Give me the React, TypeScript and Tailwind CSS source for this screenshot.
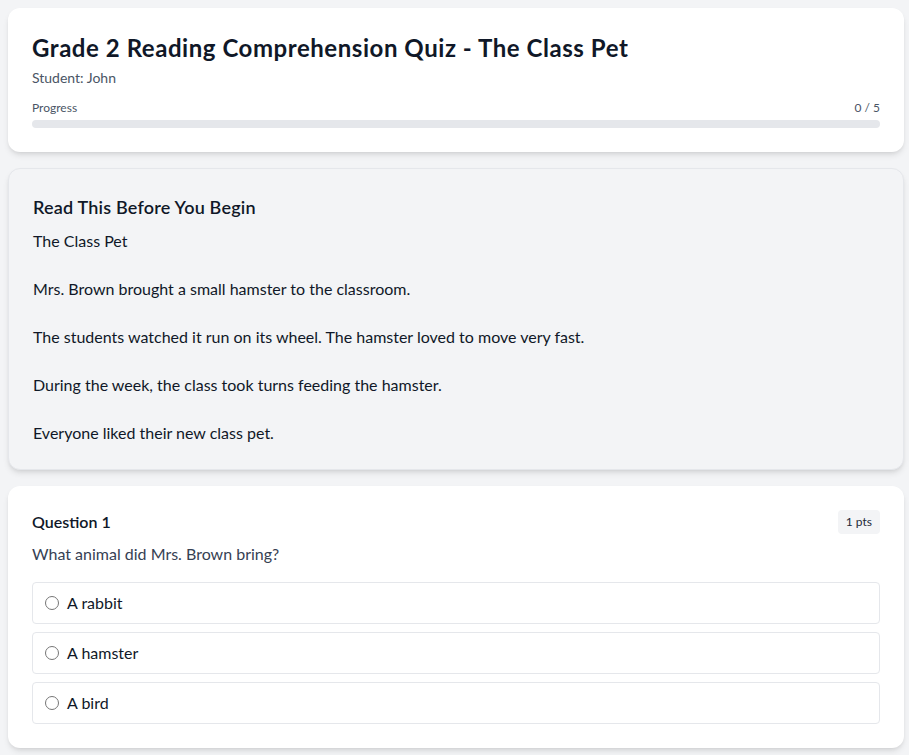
import React, { useState } from 'react';

const passage = `The Class Pet

Mrs. Brown brought a small hamster to the classroom.

The students watched it run on its wheel. The hamster loved to move very fast.

During the week, the class took turns feeding the hamster.

Everyone liked their new class pet.`;

const options = ['A rabbit', 'A hamster', 'A bird'];

export default function App() {
    const [answer, setAnswer] = useState<string | null>(null);

    return (
        <div className="min-h-screen bg-gray-100 pt-2 pb-2 pl-2 pr-[5px] space-y-4 text-gray-900" style={{ fontFamily: 'Lato, "Noto Sans", sans-serif' }}>
            <div className="rounded-xl bg-white p-6 shadow-md">
                <h1 className="text-2xl font-bold text-gray-900 leading-8 tracking-[0.55px]">Grade 2 Reading Comprehension Quiz - The Class Pet</h1>
                <p className="mt-1 text-sm text-gray-600">Student: John</p>
                <div className="mt-3">
                    <div className="flex justify-between text-xs text-gray-600 mb-1">
                        <span>Progress</span>
                        <span>{answer ? 1 : 0} / 5</span>
                    </div>
                    <div className="h-2 w-full rounded-full bg-gray-200" />
                </div>
            </div>

            <div className="rounded-xl border border-gray-200 bg-gray-100 p-6 shadow-md">
                <h2 className="text-lg font-semibold text-gray-900 mb-2 tracking-[0.2px]">Read This Before You Begin</h2>
                <p className="whitespace-pre-wrap text-base leading-6 text-gray-900">{passage}</p>
            </div>

            <div className="rounded-xl bg-white p-6 shadow-md">
                <div className="flex items-center justify-between">
                    <h3 className="font-semibold text-gray-900">Question 1</h3>
                    <span className="rounded bg-gray-100 px-2 py-1 text-xs text-gray-800">1 pts</span>
                </div>
                <p className="mt-2 text-gray-700">What animal did Mrs. Brown bring?</p>
                <div className="mt-4 space-y-2">
                    {options.map(opt => (
                        <label key={opt} className="flex items-center gap-2 rounded border border-gray-200 px-3 py-2 cursor-pointer">
                            <input type="radio" name="q1" checked={answer === opt} onChange={() => setAnswer(opt)} className="h-3.5 w-3.5" />
                            <span className="text-gray-900">{opt}</span>
                        </label>
                    ))}
                </div>
            </div>
        </div>
    );
}
